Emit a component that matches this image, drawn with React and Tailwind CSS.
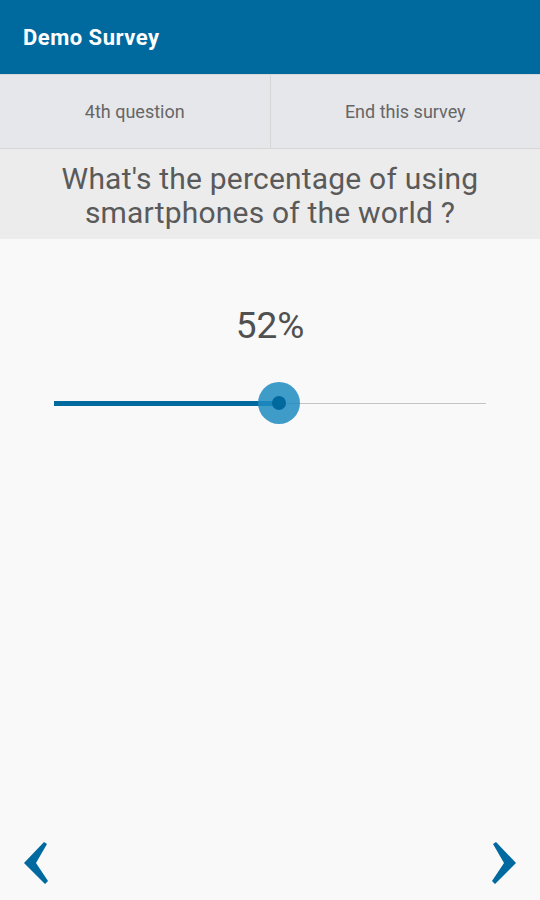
import { useState } from "react";

const ChevronLeft = () => (
  <svg width="28" height="44" viewBox="0 0 28 44" className="block">
    <polygon points="21,1 24,3 13,22 25,40 22,43 1,22" fill="#00699f" />
  </svg>
);

const ChevronRight = () => (
  <svg width="28" height="44" viewBox="0 0 28 44" className="block">
    <polygon points="7,1 4,3 15,22 3,40 6,43 27,22" fill="#00699f" />
  </svg>
);

const App = () => {
  const [value] = useState(52);

  return (
    <div className="w-[540px] h-[900px] flex flex-col bg-[#f9f9f9] font-['Roboto','Liberation_Sans',sans-serif]">
      <div className="h-[75px] shrink-0 bg-[#006a9f] flex items-center px-[23px] border-b border-[#d8d8d8]">
        <h1 className="text-white text-[22px] font-bold tracking-[0.5px]">Demo Survey</h1>
      </div>

      <div className="h-[74px] shrink-0 flex bg-[#e6e7ea] border-b border-[#d6d6d6]">
        <button className="flex-1 text-[18px] text-[#666] border-r border-[#d6d6d6]">4th question</button>
        <button className="flex-1 text-[18px] text-[#666]">End this survey</button>
      </div>

      <div className="h-[90px] shrink-0 bg-[#ececec] flex items-center justify-center text-center pt-[4px]">
        <p className="text-[30px] leading-[34px] text-[#5a5a5a] tracking-[0.2px]">
          What's the percentage of using<br />smartphones of the world ?
        </p>
      </div>

      <div className="flex-1 flex flex-col">
        <div className="pt-[66px] text-center text-[37px] leading-[42px] text-[#505050]">{value}%</div>

        <div className="mt-[35px] mx-[54px] relative h-[42px] flex items-center">
          <div className="w-full h-px bg-[#c4c4c4]" />
          <div className="absolute left-0 top-[19px] h-[5px] bg-[#006a9f]" style={{ width: `${value}%` }} />
          <div
            className="absolute top-0 w-[42px] h-[42px] -ml-[21px] rounded-full bg-[#1f8bc0]/85 flex items-center justify-center"
            style={{ left: `${value}%` }}
          >
            <div className="w-[14px] h-[14px] rounded-full bg-[#006a9f]" />
          </div>
        </div>

        <div className="mt-auto flex justify-between px-[23px] pb-[15px]">
          <button><ChevronLeft /></button>
          <button><ChevronRight /></button>
        </div>
      </div>
    </div>
  );
};

export default App;
